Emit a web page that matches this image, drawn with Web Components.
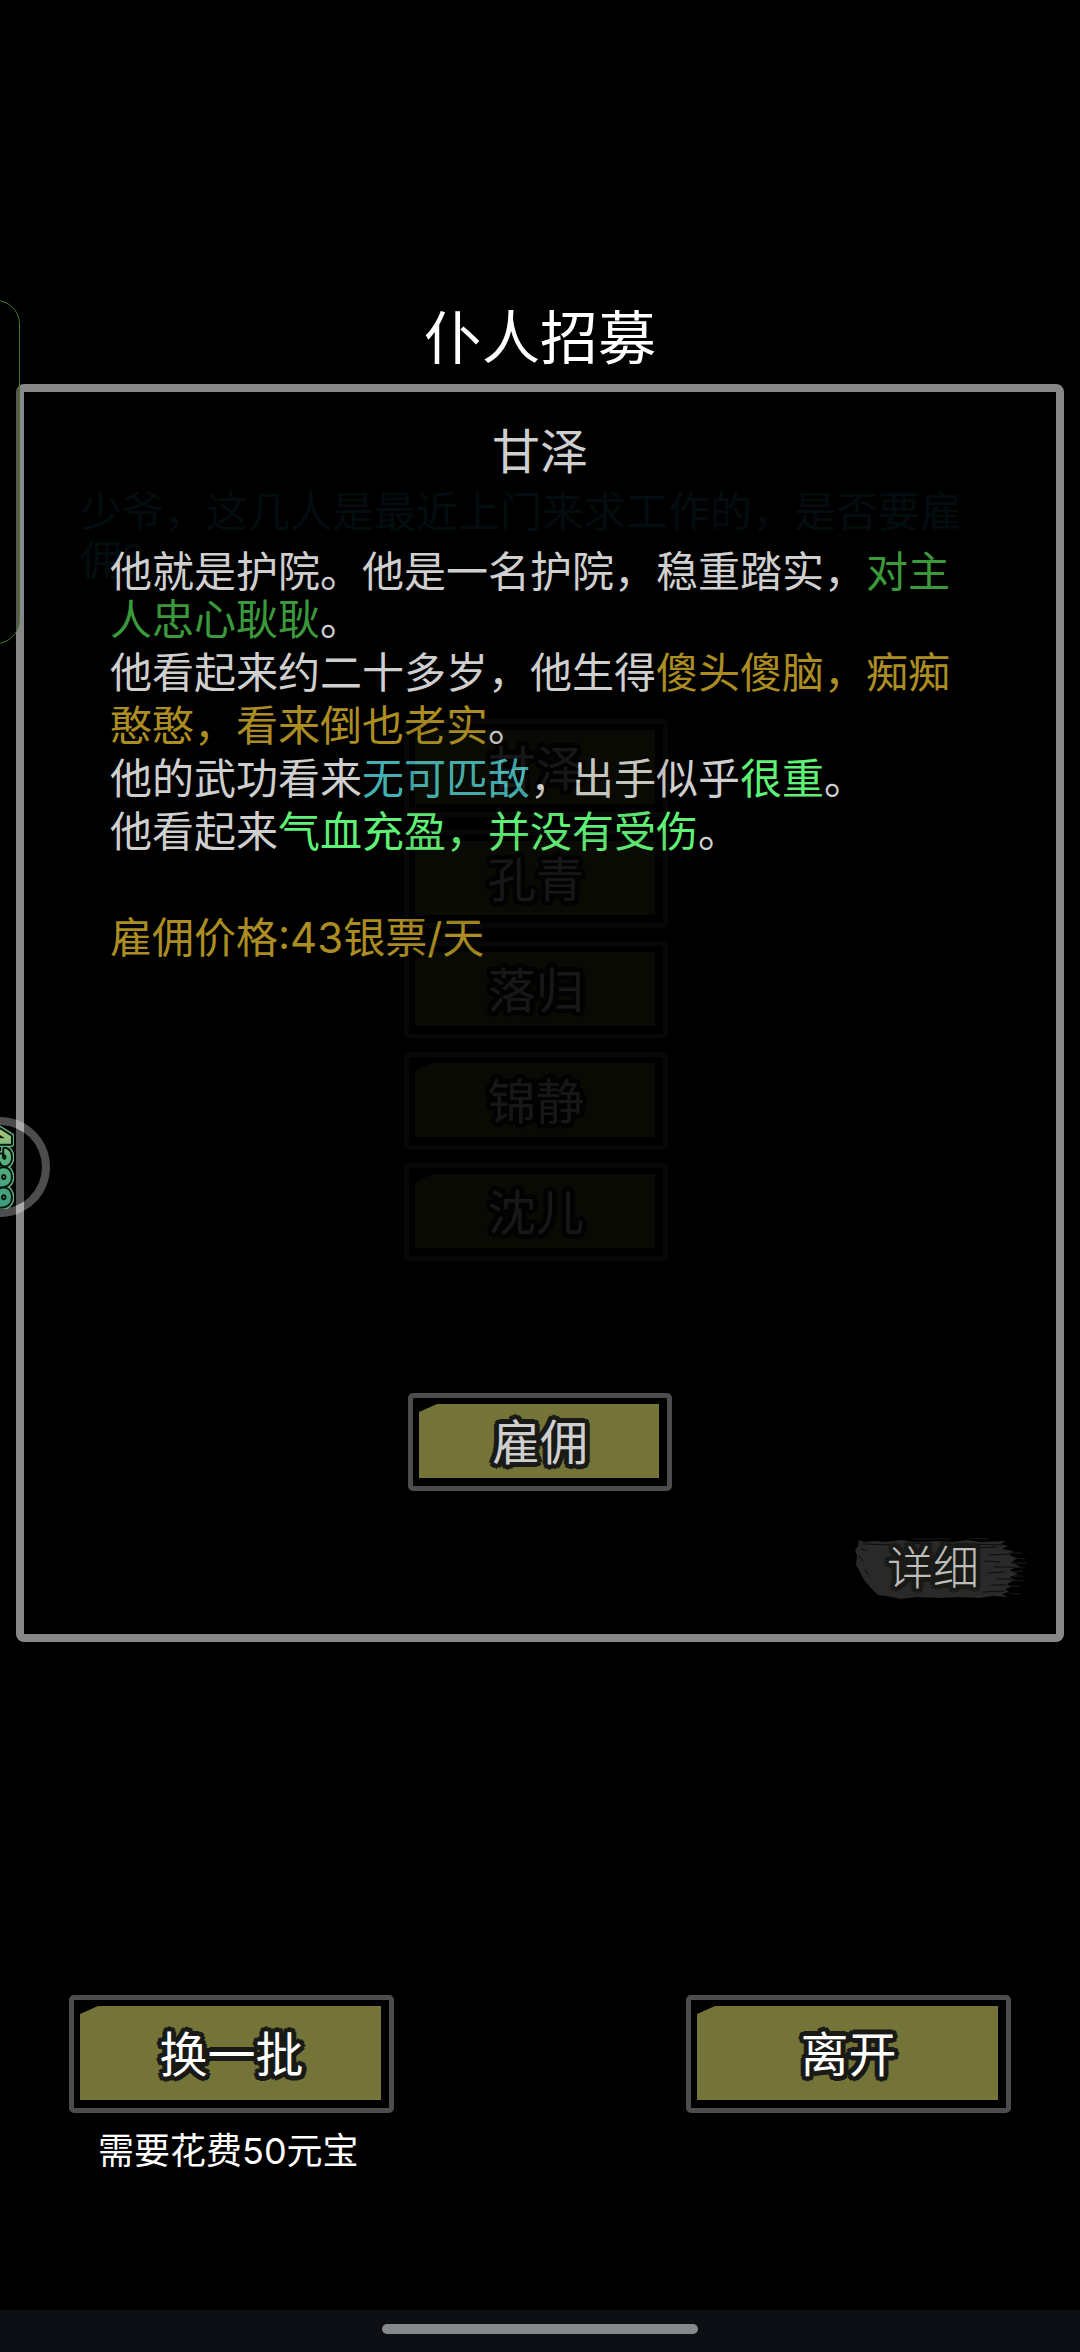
<!DOCTYPE html>
<html lang="zh-CN">
<head>
<meta charset="utf-8">
<meta name="viewport" content="width=device-width, initial-scale=1">
<title>仆人招募</title>
<style>
  html, body { margin: 0; background: #000; }
  body {
    font-family: Inter, "Noto Sans CJK SC", sans-serif; color: #fff;
    --outline:
      5px 0 #191a16, -5px 0 #191a16, 0 5px #191a16, 0 -5px #191a16,
      4px 3px #191a16, 4px -3px #191a16, -4px 3px #191a16, -4px -3px #191a16,
      3px 4px #191a16, 3px -4px #191a16, -3px 4px #191a16, -3px -4px #191a16,
      3px 0 #191a16, -3px 0 #191a16, 0 3px #191a16, 0 -3px #191a16,
      2px 2px #191a16, 2px -2px #191a16, -2px 2px #191a16, -2px -2px #191a16;
  }
</style>
</head>
<body>
<recruit-screen>
  <screen-title slot="title">仆人招募</screen-title>

  <candidate-list slot="backdrop">
    <span slot="prompt">少爷，这几人是最近上门来求工作的，是否要雇佣?</span>
    <game-button>甘泽</game-button>
    <game-button>孔青</game-button>
    <game-button>落归</game-button>
    <game-button>锦静</game-button>
    <game-button>沈儿</game-button>
  </candidate-list>

  <servant-dialog slot="dialog">
    <span slot="name">甘泽</span>
    <bio-line dense>他就是护院。他是一名护院，稳重踏实，<tone-text tone="loyal">对主人忠心耿耿</tone-text>。</bio-line>
    <bio-line>他看起来约二十多岁，他生得<tone-text tone="gold">傻头傻脑，痴痴憨憨，看来倒也老实</tone-text>。</bio-line>
    <bio-line>他的武功看来<tone-text tone="cyan">无可匹敌</tone-text>，出手似乎<tone-text tone="bright">很重</tone-text>。</bio-line>
    <bio-line>他看起来<tone-text tone="bright">气血充盈，并没有受伤</tone-text>。</bio-line>
    <bio-line price><tone-text tone="gold">雇佣价格:43银票/天</tone-text></bio-line>
    <game-button slot="hire" muted>雇佣</game-button>
    <brush-button slot="detail">详细</brush-button>
  </servant-dialog>

  <action-column slot="actions">
    <game-button size="large">换一批</game-button>
    <span slot="note">需要花费50元宝</span>
  </action-column>
  <action-column slot="actions">
    <game-button size="large">离开</game-button>
  </action-column>

  <edge-panel slot="floating"></edge-panel>
  <floating-badge slot="floating"></floating-badge>
</recruit-screen>

<script>
  const define = (name, html) => {
    const template = document.createElement('template');
    template.innerHTML = html.trim();
    customElements.define(name, class extends HTMLElement {
      constructor() {
        super();
        this.attachShadow({ mode: 'open' }).append(template.content.cloneNode(true));
      }
    });
  };

  define('recruit-screen', `
    <style>
      :host { display: flex; flex-direction: column; position: relative; min-height: 100vh; overflow: hidden; }
      .stage { display: grid; }
      .stage ::slotted(*) { grid-area: 1 / 1; }
      footer { display: flex; justify-content: space-between; align-items: flex-start; padding: 353px 69px 0; }
      nav { display: flex; justify-content: center; align-items: flex-start; box-sizing: border-box; height: 42px; padding-top: 14px; margin-top: auto; background: #0d0e13; }
      nav i { width: 316px; height: 10px; border-radius: 5px; background: #87888b; }
    </style>
    <slot name="title"></slot>
    <main class="stage"><slot name="backdrop"></slot><slot name="dialog"></slot></main>
    <footer><slot name="actions"></slot></footer>
    <nav><i></i></nav>
    <slot name="floating"></slot>`);

  define('screen-title', `
    <style>
      :host { display: block; padding: 309px 0 17px; text-align: center; }
      h1 { margin: 0; font-size: 58px; line-height: 58px; font-weight: 400; }
    </style>
    <h1><slot></slot></h1>`);

  define('candidate-list', `
    <style>
      :host { display: block; padding: 104px 88px 0 80px; }
      p { margin: 0 0 135px; font-size: 42px; line-height: 48px; color: #030d0f; }
      .list { display: flex; flex-direction: column; align-items: center; gap: 13px; opacity: .09; }
    </style>
    <p><slot name="prompt"></slot></p>
    <div class="list"><slot></slot></div>`);

  define('servant-dialog', `
    <style>
      :host { display: flex; flex-direction: column; align-items: center; margin: 0 16px; padding: 36px 0 34px; border: 8px solid #888; border-radius: 8px; color: #cfcfcf; }
      h2 { margin: 0 0 72px; font-size: 48px; line-height: 48px; font-weight: 400; }
      .bio { align-self: stretch; padding: 0 86px; }
      .hire { margin-top: 429px; }
      .detail { align-self: flex-end; margin: 47px 28px 0 0; }
    </style>
    <h2><slot name="name"></slot></h2>
    <div class="bio"><slot></slot></div>
    <div class="hire"><slot name="hire"></slot></div>
    <div class="detail"><slot name="detail"></slot></div>`);

  define('bio-line', `
    <style>
      :host { display: block; font-size: 42px; line-height: 53px; }
      :host([dense]) { line-height: 48px; margin-bottom: 2px; }
      :host([price]) { margin-top: 53px; }
    </style>
    <slot></slot>`);

  define('tone-text', `<style>
      :host { display: inline; }
      :host([tone="loyal"]) { color: #3a9a3b; }
      :host([tone="gold"]) { color: #ab8d21; }
      :host([tone="cyan"]) { color: #43b1b3; }
      :host([tone="bright"]) { color: #5ef277; }
    </style><slot></slot>`);

  define('game-button', `
    <style>
      :host { display: block; --w: 264px; --h: 98px; --ink: #fff; }
      :host([size="large"]) { --w: 325px; --h: 118px; }
      :host([muted]) { --ink: #cfcfcf; }
      button { display: flex; box-sizing: border-box; width: var(--w); height: var(--h); margin: 0; padding: 6px 8px 8px 6px; border: 5px solid #4d4d4d; border-radius: 5px; background: #000; font: inherit; color: var(--ink); cursor: pointer; }
      .face { flex: 1; align-self: stretch; display: flex; align-items: center; justify-content: center; background: #747439; clip-path: polygon(0 8px, 18px 0, 100% 0, 100% 100%, 0 100%); }
      .label { padding: 4px 0 0 2px; font-size: 48px; line-height: 48px; text-shadow: var(--outline); }
    </style>
    <button type="button"><span class="face"><span class="label"><slot></slot></span></span></button>`);

  define('brush-button', `
    <style>
      :host { display: block; }
      button { display: grid; width: 173px; height: 62px; margin: 0; padding: 0; border: 0; background: none; font: inherit; color: #bdbdbd; cursor: pointer; }
      svg { grid-area: 1 / 1; width: 173px; height: 62px; }
      span { grid-area: 1 / 1; place-self: start; padding-left: 32px; font-size: 46px; line-height: 52px; font-weight: 300; font-family: KaiTi, "Noto Sans CJK SC", serif; text-shadow: var(--outline); }
    </style>
    <button type="button">
      <svg viewBox="0 0 173 62" fill="none" aria-hidden="true">
        <path fill="#292929" d="M4 2 L9 4 L20 3 L30 4 L46 2 L60 4 L82 3 L98 4 L112 2 L126 4 L150 3 L146 6 L153 8 L147 11 L158 13 L154 17 L162 20 L156 25 L165 28 L155 32 L163 36 L155 39 L160 42 L152 46 L156 49 L150 51 L154 54 L147 56 L153 59 L138 58 L124 60 L104 59 L85 60 L62 59 L46 61 L32 58 L23 57 L16 50 L9 42 L5 34 L1 27 L2 18 L0 12 L3 8 Z"/>
        <path stroke="#0c0c0c" d="M8 6 L38 7 M52 5 L74 6 M108 6 L148 7 M120 10 L142 9 M134 17 L154 16 M130 23 L145 24 M139 29 L160 29 M132 35 L150 34 M142 41 L158 41 M136 47 L151 47 M128 54 L149 53 M4 18 L8 23 M6 11 L12 13 M10 31 L13 37"/>
        <path stroke="#1c1c1c" d="M58 1 L96 1 M114 0 L134 1 M153 15 L168 15 M158 20 L170 21 M156 25 L172 25 M158 29 L170 30 M156 34 L168 33 M158 38 L168 38 M154 42 L170 43 M152 48 L166 48 M154 55 L165 56"/>
      </svg>
      <span><slot></slot></span>
    </button>`);

  define('action-column', `
    <style>
      :host { display: flex; flex-direction: column; gap: 18px; }
      .note { padding-left: 29px; font-size: 36px; line-height: 40px; }
    </style>
    <slot></slot>
    <div class="note"><slot name="note"></slot></div>`);

  /* Edge drawer that peeks in from the left side of the screen */
  define('edge-panel', `
    <style>
      :host { position: absolute; left: -60px; top: 300px; box-sizing: border-box; width: 80px; height: 344px; border: 1px solid #4b7a20; border-radius: 24px; background: rgba(0, 0, 0, .35); }
    </style>`);

  /* Floating service badge, half docked at the left edge */
  define('floating-badge', `
    <style>
      :host { position: absolute; left: -50px; top: 1117px; box-sizing: border-box; width: 100px; height: 100px; border: 8px solid rgba(255, 255, 255, .3); border-radius: 50%; background: rgba(0, 0, 0, .4); background-clip: padding-box; }
      svg { display: block; width: 84px; height: 84px; }
      text { font: 900 30px Inter, sans-serif; text-anchor: middle; stroke-linejoin: round; paint-order: stroke; }
      g { filter: drop-shadow(1px 0 0 #5fb583) drop-shadow(-1px 0 0 #5fb583) drop-shadow(0 1px 0 #5fb583) drop-shadow(0 -1px 0 #5fb583); }
    </style>
    <svg viewBox="-42 -42 84 84" role="img">
      <defs>
        <linearGradient id="g" x1="0" x2="1" y1="0" y2="0">
          <stop offset="0" stop-color="#b5c878"/>
          <stop offset=".4" stop-color="#55b07c"/>
          <stop offset="1" stop-color="#3b9a80"/>
        </linearGradient>
      </defs>
      <g transform="rotate(90)">
        <text y="11" fill="url(#g)" stroke="#07140d" stroke-width="4">4399</text>
      </g>
    </svg>`);
</script>
</body>
</html>
